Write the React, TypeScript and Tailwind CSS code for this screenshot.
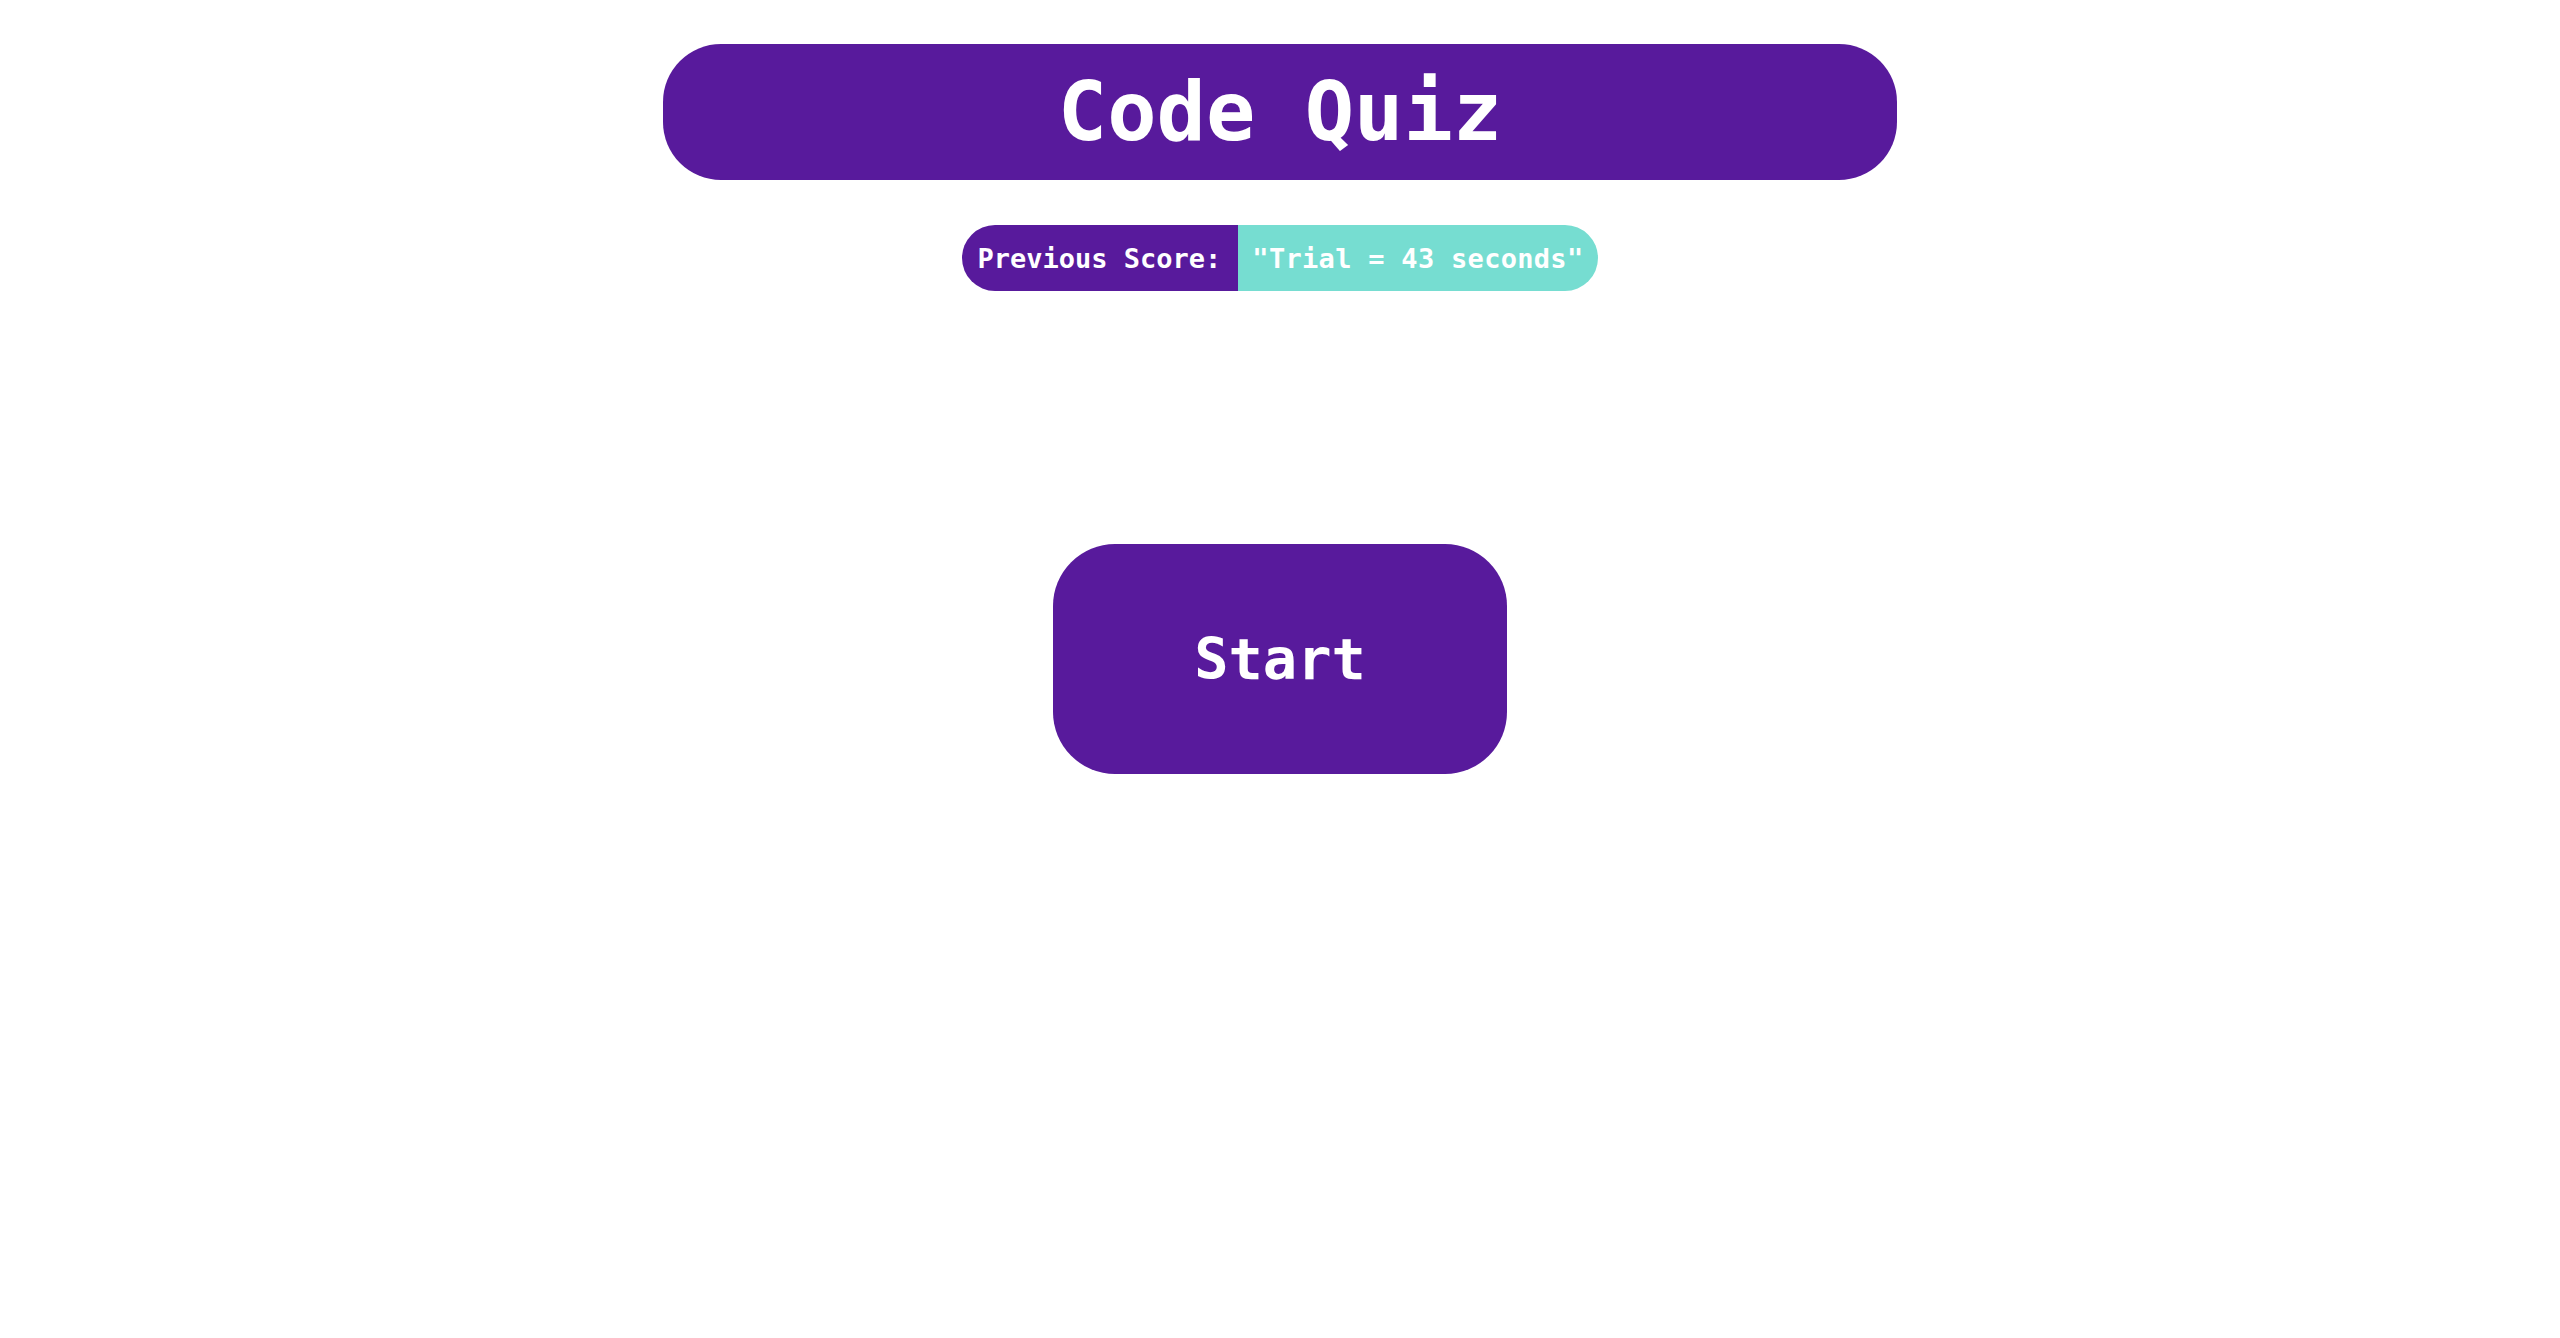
import React from "react";

const mono = { fontFamily: '"DejaVu Sans Mono", "Liberation Mono", monospace' };

export default function App() {
  const previousScore = "Trial = 43 seconds";

  return (
    <div className="min-h-screen bg-white flex flex-col items-center pt-[44px]" style={mono}>
      <header className="w-[1234px] h-[136px] rounded-[58px] bg-[#581a9c] flex items-center justify-center">
        <h1 className="text-[82px] font-bold text-white leading-none">Code Quiz</h1>
      </header>

      <div className="mt-[45px] flex h-[66px] rounded-full overflow-hidden text-[27px] font-bold text-white leading-none">
        <span className="bg-[#581a9c] flex items-center pl-[16px] pr-[17px] whitespace-pre">
          Previous Score:
        </span>
        <span className="bg-[#76ddd1] flex items-center pl-[14px] pr-[15px] tracking-[0.3px] whitespace-pre">
          "{previousScore}"
        </span>
      </div>

      <button className="mt-[253px] w-[454px] h-[230px] rounded-[62px] bg-[#581a9c] text-white text-[57px] font-bold leading-none">
        Start
      </button>
    </div>
  );
}
